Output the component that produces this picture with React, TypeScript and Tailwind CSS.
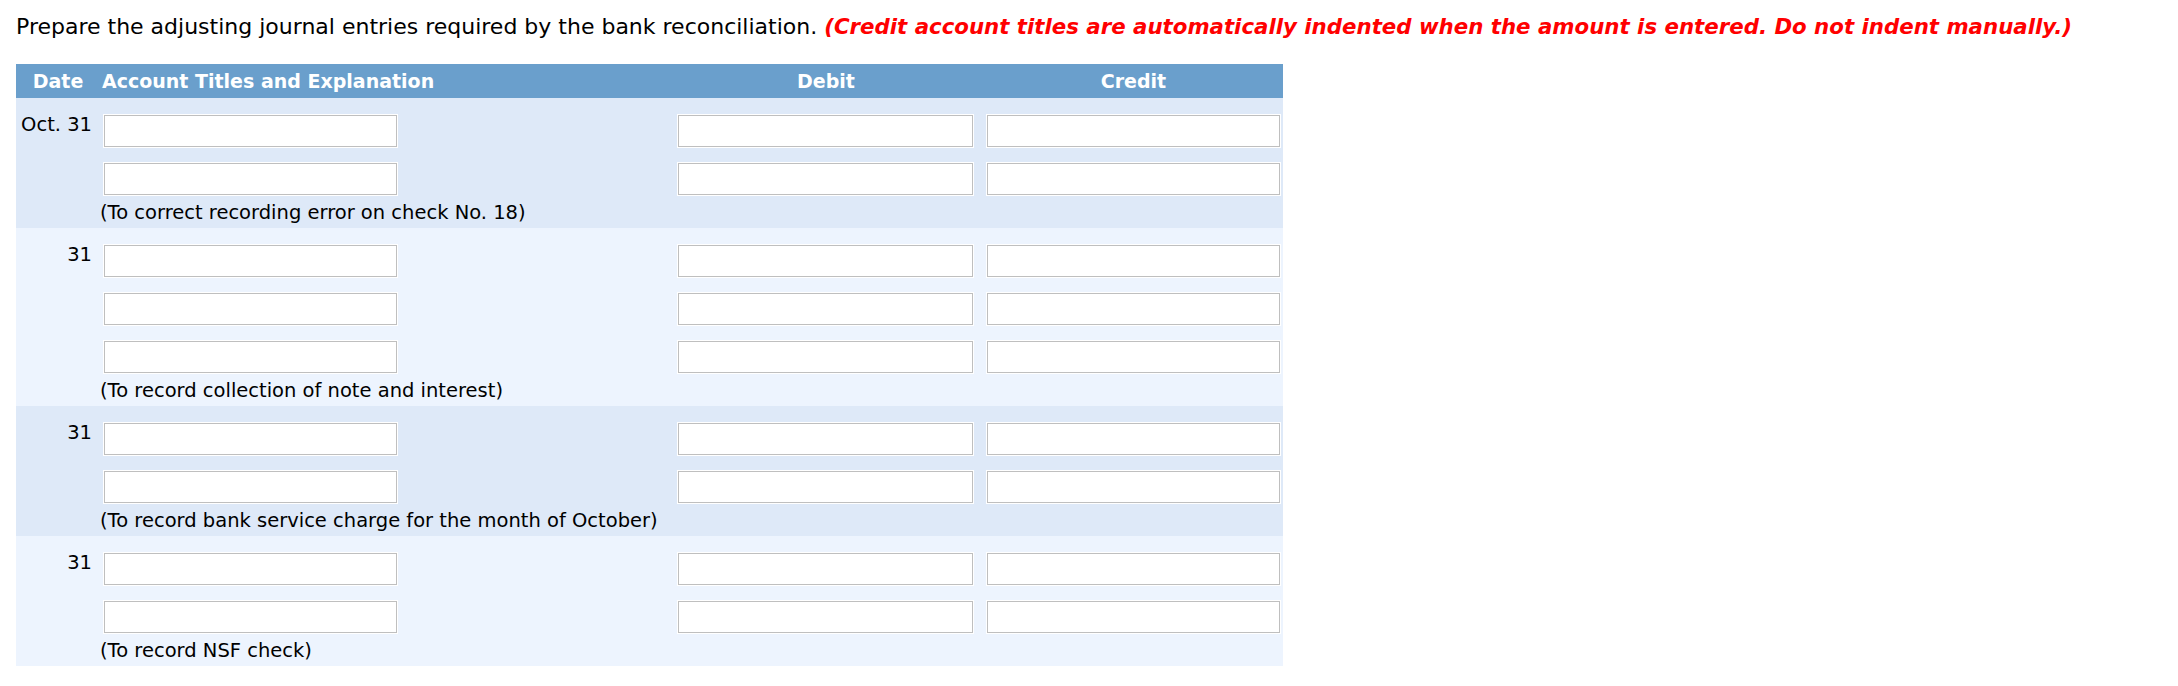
import React from "react";

type Entry = {
  date: string;
  rows: number;
  note: string;
  shade: string;
};

const entries: Entry[] = [
  { date: "Oct. 31", rows: 2, note: "(To correct recording error on check No. 18)", shade: "bg-[#dee9f8]" },
  { date: "31", rows: 3, note: "(To record collection of note and interest)", shade: "bg-[#edf4fe]" },
  { date: "31", rows: 2, note: "(To record bank service charge for the month of October)", shade: "bg-[#dee9f8]" },
  { date: "31", rows: 2, note: "(To record NSF check)", shade: "bg-[#edf4fe]" },
];

const cols = "grid grid-cols-[84px_578px_296px_309px]";
const field = "h-[32px] bg-white border border-[#bfbfbf] ring-1 ring-white outline-none";

function JournalEntry({ entry }: { entry: Entry }) {
  return (
    <div className={`${entry.shade} pt-[17px]`}>
      <div className="flex flex-col gap-[16px]">
        {Array.from({ length: entry.rows }).map((_, i) => (
          <div key={i} className={`${cols} h-[32px]`}>
            <div className="pr-[8px] text-right text-[19.5px] leading-[20px] text-black whitespace-nowrap">
              {i === 0 ? entry.date : ""}
            </div>
            <div className="pl-[4px]">
              <input type="text" className={`${field} w-[293px]`} />
            </div>
            <div>
              <input type="text" className={`${field} w-[295px]`} />
            </div>
            <div className="pl-[13px]">
              <input type="text" className={`${field} w-[293px]`} />
            </div>
          </div>
        ))}
      </div>
      <div className={`${cols} h-[33px]`}>
        <div />
        <div className="col-span-3 pt-[6px] text-[19.5px] leading-[24px] text-black whitespace-nowrap">
          {entry.note}
        </div>
      </div>
    </div>
  );
}

export default function App() {
  return (
    <div className="w-[2178px] h-[686px] bg-white font-['DejaVu_Sans',sans-serif]">
      <p className="pl-[16px] pt-[14px] text-[22px] leading-[26px] text-black whitespace-nowrap">
        Prepare the adjusting journal entries required by the bank reconciliation.{" "}
        <span className="font-bold italic text-[21.3px] text-[#ff0000]">
          (Credit account titles are automatically indented when the amount is entered. Do not indent manually.)
        </span>
      </p>

      <div className="ml-[16px] mt-[24px] w-[1267px]">
        <div className={`${cols} h-[34px] items-center bg-[#6a9fcc] text-white font-bold text-[19px] leading-[22px]`}>
          <div className="text-center">Date</div>
          <div className="pl-[2px] whitespace-nowrap">Account Titles and Explanation</div>
          <div className="text-center">Debit</div>
          <div className="pl-[13px] pr-[3px] text-center">Credit</div>
        </div>
        {entries.map((e, idx) => (
          <JournalEntry key={idx} entry={e} />
        ))}
      </div>
    </div>
  );
}
